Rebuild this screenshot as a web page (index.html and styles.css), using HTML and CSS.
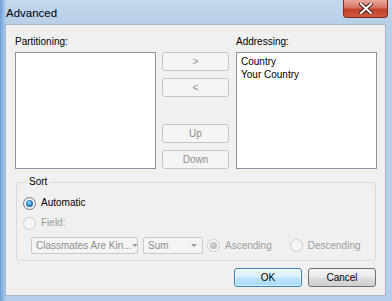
FILE: index.html
```html
<!Doctype html>
<html lang="en">
<head>
	<meta charset="utf-8">
	<title>Advanced</title>
	<link rel="stylesheet" href="styles.css">
</head>
<body>

	<div class="window">
		<div class="titlebar">
			<span class="title">Advanced</span>
			<div class="close">
				<svg width="14" height="11" viewBox="0 0 14 11">
					<path d="M2 1 L12 10 M12 1 L2 10" stroke="#4a1c1c" stroke-width="4" stroke-linecap="square"/>
					<path d="M2 1 L12 10 M12 1 L2 10" stroke="#fff" stroke-width="2" stroke-linecap="square"/>
				</svg>
			</div>
		</div>

		<div class="client">
			<div class="fields">
				<div class="column">
					<div class="label">Partitioning:</div>
					<div class="listbox"></div>
				</div>

				<div class="movers">
					<button class="btn" disabled>&gt;</button>
					<button class="btn" disabled>&lt;</button>
					<div class="spacer"></div>
					<button class="btn" disabled>Up</button>
					<button class="btn" disabled>Down</button>
				</div>

				<div class="column">
					<div class="label">Addressing:</div>
					<div class="listbox">
						<div class="item">Country</div>
						<div class="item">Your Country</div>
					</div>
				</div>
			</div>

			<fieldset class="sort">
				<legend>Sort</legend>
				<div class="option">
					<span class="radio on"></span>
					<span>Automatic</span>
				</div>
				<div class="option disabled">
					<span class="radio"></span>
					<span>Field:</span>
				</div>
				<div class="field_row">
					<div class="combo wide"><span>Classmates Are Kin...</span><span class="arrow"></span></div>
					<div class="combo narrow"><span>Sum</span><span class="arrow"></span></div>
					<div class="option disabled asc">
						<span class="radio on"></span>
						<span>Ascending</span>
					</div>
					<div class="option disabled desc">
						<span class="radio"></span>
						<span>Descending</span>
					</div>
				</div>
			</fieldset>

			<div class="actions">
				<button class="btn action default">OK</button>
				<button class="btn action">Cancel</button>
			</div>
		</div>
	</div>

</body>
</html>
```

FILE: styles.css
```css
html, body {
	margin: 0;
	padding: 0;
}

body {
	width: 392px;
	height: 301px;
	overflow: hidden;
	font-family: "Liberation Sans", Arial, sans-serif;
	font-size: 10px;
	color: #000;
	background:
		linear-gradient(90deg, #6e9fd4 0, #a9c8ea 5px, rgba(0, 0, 0, 0) 6px),
		linear-gradient(180deg, #c3d7ec 0, #b8cfe8 24px, #b5cfec 100%);
}

.window {
	display: flex;
	flex-direction: column;
}

.titlebar {
	height: 24px;
	display: flex;
	justify-content: space-between;
	align-items: flex-start;
}

.title {
	font-size: 11.5px;
	margin: 7px 0 0 6px;
	line-height: 13px;
	color: #000;
}

.close {
	width: 45px;
	height: 18px;
	margin-right: 4px;
	box-sizing: border-box;
	border: 1px solid #7a2a22;
	border-top: none;
	border-radius: 0 0 4px 4px;
	background: linear-gradient(180deg, #e9a99c 0, #d9735f 45%, #c2412c 55%, #d0583f 100%);
	display: flex;
	align-items: center;
	justify-content: center;
}

.client {
	margin-left: 5px;
	width: 381px;
	height: 272px;
	box-sizing: border-box;
	border: 1px solid #a3b5c8;
	background: #f0f0f0;
	padding: 10px 8px 0 9px;
}

.fields {
	display: flex;
}

.column {
	display: flex;
	flex-direction: column;
}

.label {
	line-height: 13px;
	margin-bottom: 4px;
}

.listbox {
	width: 141px;
	height: 117px;
	box-sizing: border-box;
	border: 1px solid #8e949c;
	background: #fff;
	padding: 2px 4px;
}

.item {
	line-height: 13px;
}

.movers {
	width: 67px;
	margin: 17px 7px 0 6px;
	display: flex;
	flex-direction: column;
	gap: 7px;
}

.spacer {
	height: 13px;
}

.btn {
	height: 19px;
	box-sizing: border-box;
	padding: 0;
	font-family: inherit;
	font-size: 10px;
	border-radius: 3px;
	border: 1px solid #c3c6c9;
	background: #f4f4f4;
	color: #8d8d8d;
}

.sort {
	margin: 7px 0 0 1px;
	width: 360px;
	box-sizing: border-box;
	border: 1px solid #d5dde4;
	border-radius: 3px;
	padding: 8px 6px 6px 6px;
	display: flex;
	flex-direction: column;
	gap: 6px;
}

.sort legend {
	padding: 0 2px;
	margin-left: 4px;
	line-height: 12px;
}

.option {
	display: flex;
	align-items: center;
	gap: 5px;
	line-height: 14px;
}

.option.disabled {
	color: #9d9d9d;
}

.radio {
	width: 13px;
	height: 13px;
	box-sizing: border-box;
	border-radius: 50%;
	border: 1px solid #6f7a86;
	background: radial-gradient(circle, #ffffff 0, #e6e9ec 100%);
	display: flex;
	align-items: center;
	justify-content: center;
}

.radio.on:after {
	content: "";
	width: 7px;
	height: 7px;
	border-radius: 50%;
	background: radial-gradient(circle at 45% 40%, #9be4ff 0, #2c86cc 45%, #0d3d74 100%);
}

.disabled .radio {
	border-color: #c9cdd1;
	background: #f6f6f6;
}

.disabled .radio.on:after {
	background: radial-gradient(circle at 45% 40%, #d8d8d8 0, #a9a9a9 100%);
}

.field_row {
	display: flex;
	align-items: center;
	margin-left: 8px;
	margin-top: 1px;
}

.combo {
	height: 17px;
	box-sizing: border-box;
	border: 1px solid #c9c9c9;
	border-radius: 2px;
	background: #f4f4f4;
	color: #8d8d8d;
	display: flex;
	align-items: center;
	justify-content: space-between;
	padding: 0 5px 0 4px;
	white-space: nowrap;
}

.combo.wide {
	width: 107px;
	margin-right: 5px;
}

.combo.narrow {
	width: 60px;
	margin-right: 4px;
}

.arrow {
	width: 0;
	height: 0;
	border-left: 3px solid transparent;
	border-right: 3px solid transparent;
	border-top: 3px solid #9a9a9a;
}

.option.asc {
	margin-right: 18px;
}

.actions {
	display: flex;
	justify-content: flex-end;
	gap: 6px;
	margin: 7px 1px 0 0;
}

.btn.action {
	width: 68px;
	color: #000;
	border-color: #707070;
	background: linear-gradient(180deg, #f3f3f3 0, #ebebeb 48%, #dddddd 52%, #cfcfcf 100%);
}

.btn.action.default {
	border-color: #3c7fb1;
	background: linear-gradient(180deg, #eaf6fd 0, #d9f0fc 48%, #bee6fd 52%, #a7d9f5 100%);
	box-shadow: inset 0 0 0 1px rgba(255, 255, 255, 0.6);
}
```
